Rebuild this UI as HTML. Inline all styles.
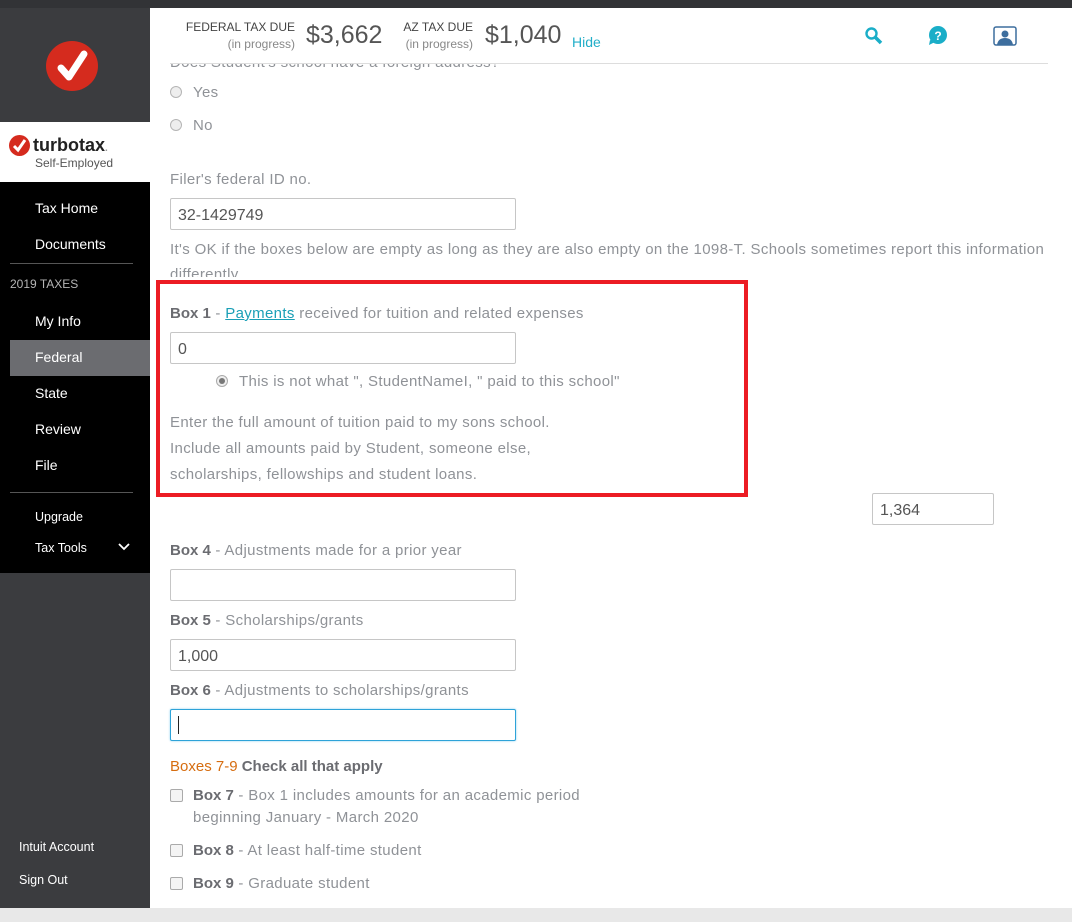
<!DOCTYPE html>
<html><head><meta charset="utf-8"><style>
*{margin:0;padding:0;box-sizing:border-box}
body{width:1072px;height:922px;overflow:hidden;background:#fff;font-family:"Liberation Sans",sans-serif;position:relative}
.a{position:absolute;white-space:nowrap}
.g{color:#8f9297;font-size:15px;letter-spacing:0.35px}
.b{color:#6b6c71;font-weight:bold;letter-spacing:0}
.in{position:absolute;border:1px solid #c6c6c6;border-radius:2px;background:#fff;font-size:16px;color:#555;padding:8px 7px 0;height:32px}
.nav{position:absolute;left:35px;color:#fff;font-size:14px}
.rad{position:absolute;width:12px;height:12px;border-radius:50%;border:1px solid #b5b5b5;background:#eee}
.cb{position:absolute;width:13px;height:13px;border:1px solid #aaa;border-radius:2px;background:#f4f4f4}
</style></head><body>
<div class="a" style="left:0;top:0;width:1072px;height:8px;background:#323336"></div>
<div class="a" style="left:0;top:8px;width:150px;height:900px;background:#3b3c3f"></div>
<div class="a" style="left:0;top:908px;width:1072px;height:14px;background:#e8e8e8"></div>
<div class="a" style="left:46px;top:41px;width:52px;height:50px;border-radius:50%;background:#d52b1e"></div>
<svg class="a" style="left:46px;top:41px" width="52" height="50"><path d="M15 27 L23 36 L38 13" stroke="#fff" stroke-width="7" fill="none" stroke-linecap="round" stroke-linejoin="round"/></svg>
<div class="a" style="left:0;top:122px;width:150px;height:60px;background:#fff"></div>
<div class="a" style="left:9px;top:135px;width:21px;height:21px;border-radius:50%;background:#d52b1e"></div>
<svg class="a" style="left:9px;top:135px" width="21" height="21"><path d="M5 11 L9 15 L16 5" stroke="#fff" stroke-width="3" fill="none"/></svg>
<div class="a" style="left:33px;top:135px;font-size:18px;font-weight:bold;color:#222">turbotax<span style="color:#999;font-size:10px">.</span></div>
<div class="a" style="left:35px;top:156px;font-size:12px;color:#555">Self-Employed</div>
<div class="a" style="left:0;top:182px;width:150px;height:391px;background:#000"></div>
<div class="nav" style="top:200px">Tax Home</div>
<div class="nav" style="top:236px">Documents</div>
<div class="a" style="left:10px;top:263px;width:123px;height:1px;background:#555"></div>
<div class="a" style="left:10px;top:277px;font-size:12px;color:#b5b5b5">2019 TAXES</div>
<div class="nav" style="top:313px">My Info</div>
<div class="a" style="left:10px;top:340px;width:140px;height:36px;background:#6b6c70"></div>
<div class="nav" style="top:349px">Federal</div>
<div class="nav" style="top:385px">State</div>
<div class="nav" style="top:421px">Review</div>
<div class="nav" style="top:457px">File</div>
<div class="a" style="left:10px;top:492px;width:123px;height:1px;background:#555"></div>
<div class="nav" style="top:510px;font-size:12.5px">Upgrade</div>
<div class="nav" style="top:541px;font-size:12.5px">Tax Tools</div>
<svg class="a" style="left:118px;top:543px" width="12" height="8"><path d="M1 1 L6 6 L11 1" stroke="#fff" stroke-width="1.8" fill="none"/></svg>
<div class="a" style="left:19px;top:840px;font-size:12.5px;color:#fff">Intuit Account</div>
<div class="a" style="left:19px;top:873px;font-size:12.5px;color:#fff">Sign Out</div>
<div class="a" style="left:150px;top:20px;width:145px;text-align:right;font-size:12px;color:#444">FEDERAL TAX DUE</div>
<div class="a" style="left:150px;top:37px;width:145px;text-align:right;font-size:12px;color:#888">(in progress)</div>
<div class="a" style="left:306px;top:21px;font-size:25px;color:#555">$3,662</div>
<div class="a" style="left:380px;top:20px;width:93px;text-align:right;font-size:12px;color:#444">AZ TAX DUE</div>
<div class="a" style="left:380px;top:37px;width:93px;text-align:right;font-size:12px;color:#888">(in progress)</div>
<div class="a" style="left:485px;top:21px;font-size:25px;color:#555">$1,040</div>
<div class="a" style="left:572px;top:34px;font-size:14px;color:#21aec8">Hide</div>
<svg class="a" style="left:864px;top:26px" width="20" height="20"><circle cx="7.5" cy="7.5" r="5" stroke="#1aaec8" stroke-width="2.4" fill="none"/><path d="M11 11 L17 17" stroke="#1aaec8" stroke-width="3.5"/></svg>
<svg class="a" style="left:928px;top:26px" width="20" height="20"><circle cx="10" cy="9" r="9" fill="#1aaec8"/><path d="M2 14 L1 19 L7 16Z" fill="#1aaec8"/><text x="10" y="14" font-size="12" font-weight="bold" fill="#fff" text-anchor="middle" font-family="Liberation Sans">?</text></svg>
<svg class="a" style="left:993px;top:26px" width="24" height="20"><rect x="1" y="1" width="22" height="18" rx="2" fill="#fff" stroke="#3d6e9e" stroke-width="1.5"/><circle cx="12" cy="8" r="3.5" fill="#3d6e9e"/><path d="M4 19 Q5 12 12 12 Q19 12 20 19Z" fill="#3d6e9e"/></svg>
<div class="a" style="left:170px;top:63px;width:878px;height:1px;background:#ddd"></div>
<div class="a g" style="left:170px;top:54px;clip-path:inset(10px 0 0 0)">Does Student's school have a foreign address?</div>
<div class="rad" style="left:170px;top:86px"></div><div class="a g" style="left:193px;top:84px">Yes</div>
<div class="rad" style="left:170px;top:119px"></div><div class="a g" style="left:193px;top:117px">No</div>
<div class="a g" style="left:170px;top:171px">Filer's federal ID no.</div>
<div class="in" style="left:170px;top:198px;width:346px">32-1429749</div>
<div class="a g" style="left:170px;top:241px">It's OK if the boxes below are empty as long as they are also empty on the 1098-T. Schools sometimes report this information</div>
<div class="a g" style="left:170px;top:266px;clip-path:inset(0 0 6px 0)">differently.</div>
<div class="a" style="left:156px;top:280px;width:592px;height:217px;border:4px solid #ec1c24"></div>
<div class="a g" style="left:170px;top:305px"><span class="b">Box 1</span> - <span style="color:#1a9fb6;text-decoration:underline">Payments</span> received for tuition and related expenses</div>
<div class="in" style="left:170px;top:332px;width:346px">0</div>
<div class="a" style="left:216px;top:375px;width:12px;height:12px;border-radius:50%;border:1px solid #aaa;background:#eee"><div style="margin:2px;width:6px;height:6px;border-radius:50%;background:#777"></div></div>
<div class="a g" style="left:239px;top:373px">This is not what ", StudentNameI, " paid to this school"</div>
<div class="a g" style="left:170px;top:414px">Enter the full amount of tuition paid to my sons school.</div>
<div class="a g" style="left:170px;top:440px">Include all amounts paid by Student, someone else,</div>
<div class="a g" style="left:170px;top:466px">scholarships, fellowships and student loans.</div>
<div class="in" style="left:872px;top:493px;width:122px">1,364</div>
<div class="a g" style="left:170px;top:542px"><span class="b">Box 4</span> - Adjustments made for a prior year</div>
<div class="in" style="left:170px;top:569px;width:346px"></div>
<div class="a g" style="left:170px;top:612px"><span class="b">Box 5</span> - Scholarships/grants</div>
<div class="in" style="left:170px;top:639px;width:346px">1,000</div>
<div class="a g" style="left:170px;top:682px"><span class="b">Box 6</span> - Adjustments to scholarships/grants</div>
<div class="in" style="left:170px;top:709px;width:346px;border-color:#2ea3d8;box-shadow:0 0 2px #8fd0f0;padding-top:6px"><div style="width:1px;height:18px;background:#222"></div></div>
<div class="a" style="left:170px;top:758px;font-size:15px;font-weight:bold;color:#6b6c71"><span style="color:#d66d10;font-weight:normal">Boxes 7-9</span> Check all that apply</div>
<div class="cb" style="left:170px;top:789px"></div>
<div class="a g" style="left:193px;top:787px"><span class="b">Box 7</span> - Box 1 includes amounts for an academic period</div>
<div class="a g" style="left:193px;top:809px">beginning January - March 2020</div>
<div class="cb" style="left:170px;top:844px"></div>
<div class="a g" style="left:193px;top:842px"><span class="b">Box 8</span> - At least half-time student</div>
<div class="cb" style="left:170px;top:877px"></div>
<div class="a g" style="left:193px;top:875px"><span class="b">Box 9</span> - Graduate student</div>
</body></html>
